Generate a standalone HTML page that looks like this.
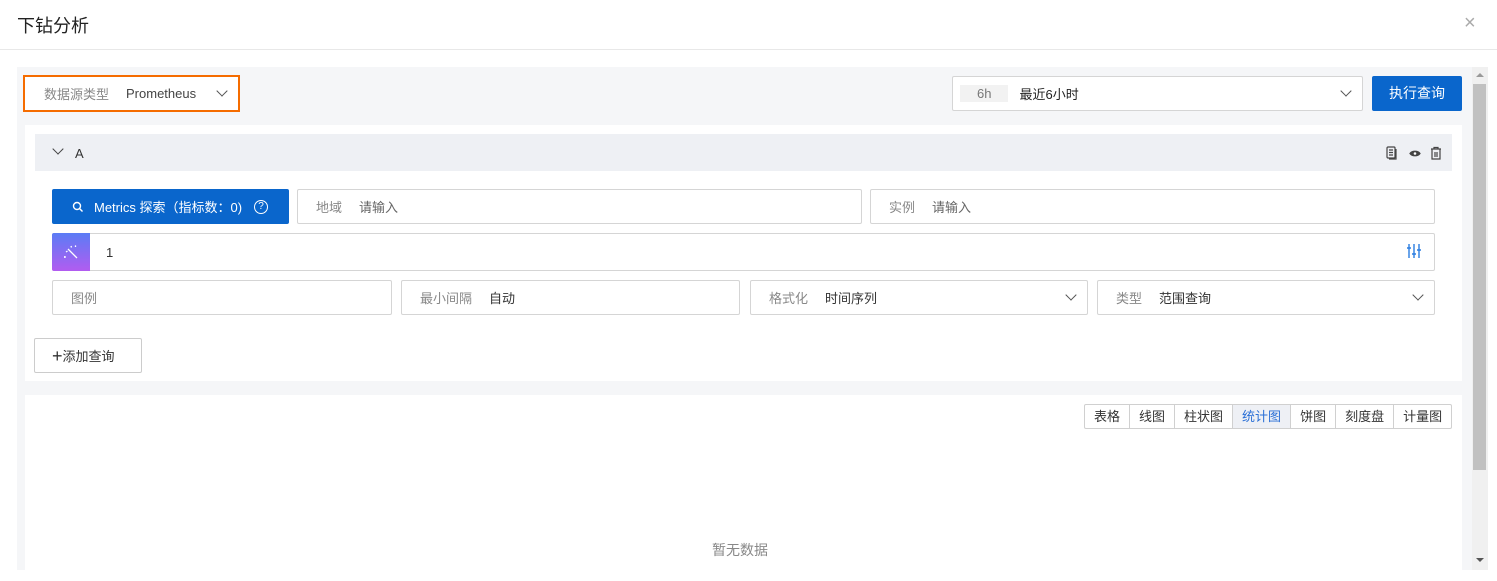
<!DOCTYPE html>
<html><head><meta charset="utf-8"><style>
*{box-sizing:border-box;margin:0;padding:0}
body{width:1497px;height:581px;overflow:hidden;background:#fff;font-family:"Liberation Sans","Noto Sans CJK SC",sans-serif;font-size:12px;color:#333;position:relative}
.a{position:absolute}
.inp{position:absolute;border:1px solid #d5d5d5;background:#fff;border-radius:2px;height:35px;display:flex;align-items:center;padding-left:18px}
.lab{color:#888;margin-right:17px}
.chev{position:absolute;right:12px;width:8px;height:8px;border-right:1.3px solid #555;border-bottom:1.3px solid #555;transform:rotate(45deg);top:10px}
.seg{display:flex;border:1px solid #d0d0d0;border-radius:2px;height:25px}
.seg div{border-right:1px solid #d0d0d0;padding:0 9px;line-height:23px;font-size:13px;color:#333}
.seg div:last-child{border-right:none}
</style></head><body>
<div class="a" style="left:17px;top:12px;font-size:18px;color:#222">下钻分析</div>
<div class="a" style="left:1464px;top:12px;font-size:20px;color:#aaa">×</div>
<div class="a" style="left:0;top:49px;width:1497px;height:1px;background:#e8e8e8"></div>
<div class="a" style="left:17px;top:67px;width:1455px;height:503px;background:#f5f6f8"></div>
<div class="a" style="left:1472px;top:67px;width:16px;height:503px;background:#f0f0f0"></div>
<div class="a" style="left:1473px;top:84px;width:13px;height:386px;background:#c1c1c1"></div>
<div class="a" style="left:1476px;top:73px;width:0;height:0;border-left:4px solid transparent;border-right:4px solid transparent;border-bottom:4px solid #999"></div>
<div class="a" style="left:1476px;top:558px;width:0;height:0;border-left:4px solid transparent;border-right:4px solid transparent;border-top:4px solid #555"></div>
<div class="a" style="left:23px;top:75px;width:217px;height:37px;border:2px solid #f56c00;background:#fff;display:flex;align-items:center;padding-left:19px;font-size:13px">
<span style="color:#888;margin-right:17px">数据源类型</span><span style="color:#444">Prometheus</span>
<span class="chev" style="right:12px;top:10px"></span></div>
<div class="inp" style="left:952px;top:76px;width:411px;height:35px;padding-left:7px;font-size:13px">
<span style="background:#f2f2f2;color:#777;padding:0 17px;line-height:17px;margin-right:11px">6h</span><span style="color:#222">最近6小时</span><span class="chev"></span></div>
<div class="a" style="left:1372px;top:76px;width:90px;height:35px;background:#0a66cc;border-radius:2px;color:#fff;font-size:14px;text-align:center;line-height:35px">执行查询</div>
<div class="a" style="left:25px;top:125px;width:1437px;height:256px;background:#fff"></div>
<div class="a" style="left:35px;top:134px;width:1417px;height:37px;background:#eef0f4"></div>
<div class="a" style="left:54px;top:145px;width:8px;height:8px;border-right:1.4px solid #444;border-bottom:1.4px solid #444;transform:rotate(45deg)"></div>
<div class="a" style="left:75px;top:146px;font-size:13px;color:#333">A</div>
<svg class="a" style="left:1385px;top:146px" width="60" height="15" viewBox="0 0 60 15" fill="none" stroke="#444" stroke-width="1.2">
<rect x="2" y="1" width="8" height="11" rx="1"/><path d="M4 4h4M4 6.5h4M4 9h4M11 3v10H4"/>
<path d="M25 7.5c2-3 8-3 10 0c-2 3-8 3-10 0z" fill="#444"/><circle cx="30" cy="7.5" r="1.3" fill="#fff" stroke="none"/>
<path d="M46 3h10M49 3V1.5h4V3M47 3v10h8V3M50 6v5M52 6v5"/></svg>
<div class="a" style="left:52px;top:189px;width:237px;height:35px;background:#0a66cc;border-radius:2px;color:#fff;font-size:13px;display:flex;align-items:center;padding-left:20px">
<svg width="12" height="12" viewBox="0 0 12 12" fill="none" stroke="#fff" stroke-width="1.4"><circle cx="5" cy="5" r="3.5"/><path d="M7.5 7.5l3 3"/></svg>
<span style="margin-left:10px">Metrics 探索（指标数：0)</span>
<span style="margin-left:12px;width:14px;height:14px;border:1.2px solid #fff;border-radius:50%;font-size:10px;text-align:center;line-height:12px">?</span></div>
<div class="inp" style="left:297px;top:189px;width:565px;font-size:13px"><span class="lab">地域</span><span style="color:#666">请输入</span></div>
<div class="inp" style="left:870px;top:189px;width:565px;font-size:13px"><span class="lab">实例</span><span style="color:#666">请输入</span></div>
<div class="inp" style="left:52px;top:233px;width:1383px;height:38px;padding-left:53px;font-size:13px">1</div>
<div class="a" style="left:52px;top:233px;width:38px;height:38px;background:linear-gradient(180deg,#5b7cf5,#b25cf0);border-radius:2px 0 0 2px"></div>
<svg class="a" style="left:62px;top:243px" width="18" height="18" viewBox="0 0 18 18" fill="none" stroke="#fff" stroke-width="1.3"><path d="M6 6l9 9M4 9l1.5-1M9 3l.5 1.5M2 14l1 0M3 13v2M13 3l1 0M13.5 2.5v1.5"/></svg>
<svg class="a" style="left:1407px;top:243px" width="14" height="16" viewBox="0 0 14 16" fill="none" stroke="#2a7de1" stroke-width="1.4"><path d="M2 1v14M7 1v14M12 1v14M0 5h4M5 11h4M10 7h4"/></svg>
<div class="inp" style="left:52px;top:280px;width:340px;font-size:13px"><span class="lab">图例</span></div>
<div class="inp" style="left:401px;top:280px;width:339px;font-size:13px"><span class="lab">最小间隔</span><span>自动</span></div>
<div class="inp" style="left:750px;top:280px;width:338px;font-size:13px"><span class="lab">格式化</span><span>时间序列</span><span class="chev"></span></div>
<div class="inp" style="left:1097px;top:280px;width:338px;font-size:13px"><span class="lab">类型</span><span>范围查询</span><span class="chev"></span></div>
<div class="a" style="left:34px;top:338px;width:108px;height:35px;border:1px solid #ccc;border-radius:2px;background:#fff;font-size:13px;line-height:33px;padding-left:17px"><span style="font-size:18px;position:relative;top:1px">+</span>添加查询</div>
<div class="a" style="left:25px;top:395px;width:1437px;height:175px;background:#fff"></div>
<div class="a seg" style="left:1084px;top:404px">
<div>表格</div><div>线图</div><div>柱状图</div><div style="background:#eef0f5;color:#2a6fd6">统计图</div><div>饼图</div><div>刻度盘</div><div>计量图</div></div>
<div class="a" style="left:712px;top:540px;font-size:14px;color:#888">暂无数据</div>
</body></html>
